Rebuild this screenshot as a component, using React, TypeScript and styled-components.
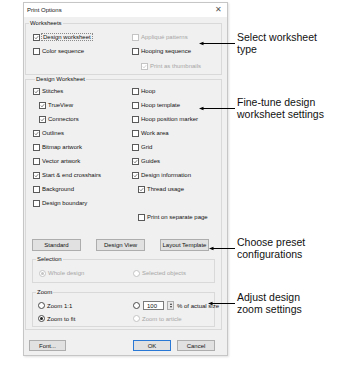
import React from 'react'
import styled, { createGlobalStyle } from 'styled-components'

const GlobalStyle = createGlobalStyle`
    html, body {
        margin: 0;
        padding: 0;
        background: #ffffff;
    }
    body {
        width: 338px;
        height: 372px;
        overflow: hidden;
        font-family: "Liberation Sans", Arial, sans-serif;
    }
`

const Page = styled.div`
    position: relative;
    width: 338px;
    height: 372px;
    box-sizing: border-box;
    padding: 2px 0 0 23px;
`

const Dialog = styled.div`
    width: 205px;
    height: 354px;
    box-sizing: border-box;
    border: 1px solid #c6c6c6;
    background: #f0f0f0;
    display: flex;
    flex-direction: column;
    box-shadow: 1px 1px 2px rgba(0, 0, 0, 0.12);
`

const TitleBar = styled.div`
    height: 14px;
    flex: none;
    background: #ffffff;
    display: flex;
    align-items: center;
    justify-content: space-between;
    padding: 0 5px 0 3px;
    font-size: 6px;
    color: #111;
`

const Close = styled.span`
    font-size: 8px;
    line-height: 8px;
    color: #555;
`

const Body = styled.div`
    padding: 3px 5px 0 1px;
    display: flex;
    flex-direction: column;
`

const Group = styled.fieldset<{ $top?: number; $pad?: string }>`
    margin: ${p => p.$top ?? 0}px 0 0 0;
    padding: ${p => p.$pad ?? '0'};
    border: 1px solid #d9d9d9;
    min-width: 0;
    font-size: 6px;
`

const Legend = styled.legend`
    margin-left: 3px;
    padding: 0 1px;
    font-size: 6px;
    line-height: 7px;
    color: #111;
`

const Grid = styled.div<{ $col: number; $lead: number }>`
    display: grid;
    grid-template-columns: ${p => p.$col}px 1fr;
    padding-left: ${p => p.$lead}px;
`

const Row = styled.div<{ $indent?: number; $disabled?: boolean; $shift?: number; $h?: number }>`
    display: flex;
    align-items: center;
    gap: 2px;
    height: ${p => p.$h ?? 14}px;
    margin-top: ${p => p.$shift ?? 0}px;
    padding-left: ${p => p.$indent ?? 0}px;
    font-size: 6px;
    white-space: nowrap;
    color: ${p => (p.$disabled ? '#a6a6a6' : '#111')};
`

const Box = styled.span<{ $disabled?: boolean }>`
    width: 7px;
    height: 7px;
    flex: none;
    box-sizing: border-box;
    border: 1px solid ${p => (p.$disabled ? '#c4c4c4' : '#5a5a5a')};
    background: #ffffff;
    display: flex;
    align-items: center;
    justify-content: center;
`

const Dot = styled.span<{ $disabled?: boolean }>`
    width: 7px;
    height: 7px;
    flex: none;
    box-sizing: border-box;
    border-radius: 50%;
    border: 1px solid ${p => (p.$disabled ? '#c4c4c4' : '#4a4a4a')};
    background: #ffffff;
    display: flex;
    align-items: center;
    justify-content: center;
    &::after {
        content: '';
        width: 3px;
        height: 3px;
        border-radius: 50%;
        background: ${p => (p.$disabled ? '#c4c4c4' : '#222')};
        display: var(--dot, none);
    }
`

const Focus = styled.span`
    outline: 1px dotted #8a8a8a;
    outline-offset: 0px;
    padding: 0 1px;
`

const Buttons = styled.div<{ $top: number; $lead: number; $gap: number }>`
    display: flex;
    gap: ${p => p.$gap}px;
    margin-top: ${p => p.$top}px;
    padding-left: ${p => p.$lead}px;
`

const Button = styled.div<{ $w: number; $h?: number; $primary?: boolean; $push?: boolean }>`
    width: ${p => p.$w}px;
    height: ${p => p.$h ?? 12}px;
    box-sizing: border-box;
    border: 1px solid ${p => (p.$primary ? '#2a78d6' : '#adadad')};
    background: #e1e1e1;
    display: flex;
    align-items: center;
    justify-content: center;
    font-size: 6px;
    color: #111;
    margin-left: ${p => (p.$push ? 'auto' : '0')};
`

const Field = styled.span`
    width: 21px;
    height: 9px;
    box-sizing: border-box;
    border: 1px solid #7a7a7a;
    background: #fff;
    display: flex;
    align-items: center;
    padding-left: 3px;
    margin-left: 1px;
    font-size: 6px;
`

const Spin = styled.span`
    width: 7px;
    height: 9px;
    box-sizing: border-box;
    border: 1px solid #adadad;
    background: #e8e8e8;
    display: flex;
    flex-direction: column;
    align-items: center;
    justify-content: space-around;
    margin: 0 1px 0 1px;
    &::before,
    &::after {
        content: '';
        width: 0;
        height: 0;
        border-left: 1.5px solid transparent;
        border-right: 1.5px solid transparent;
    }
    &::before {
        border-bottom: 2px solid #333;
    }
    &::after {
        border-top: 2px solid #333;
    }
`

const Footer = styled.div`
    display: flex;
    gap: 6px;
    margin-top: 10px;
    padding: 0 7px 0 4px;
`

const Callout = styled.div<{ $top: number; $left: number }>`
    position: absolute;
    top: ${p => p.$top}px;
    left: ${p => p.$left}px;
    display: flex;
    align-items: center;
    gap: 2px;
`

const Note = styled.div`
    font-size: 10.5px;
    line-height: 12px;
    color: #111;
    white-space: nowrap;
`

function Check({ checked, disabled }: { checked?: boolean; disabled?: boolean }) {
    return (
        <Box $disabled={disabled}>
            {checked && (
                <svg width="7" height="7" viewBox="0 0 10 10">
                    <path
                        d="M1.8 5.2 L4 7.6 L8.4 2.4"
                        fill="none"
                        stroke={disabled ? '#b5b5b5' : '#2b2b2b'}
                        strokeWidth="1.2"
                    />
                </svg>
            )}
        </Box>
    )
}

type Opt = { label?: string; checked?: boolean; disabled?: boolean; indent?: number; shift?: number; focus?: boolean }

function Option({ label, checked, disabled, indent, shift, focus }: Opt) {
    if (!label) return <Row $shift={shift} />
    return (
        <Row $indent={indent} $disabled={disabled} $shift={shift}>
            <Check checked={checked} disabled={disabled} />
            {focus ? <Focus>{label}</Focus> : <span>{label}</span>}
        </Row>
    )
}

function Radio({ checked, disabled }: { checked?: boolean; disabled?: boolean }) {
    return <Dot $disabled={disabled} style={{ ['--dot' as string]: checked ? 'block' : 'none' }} />
}

function Arrow({ width }: { width: number }) {
    return (
        <svg width={width} height="5" viewBox={`0 0 ${width} 5`}>
            <line x1="3" y1="2.5" x2={width} y2="2.5" stroke="#000" strokeWidth="1" />
            <path d="M0 2.5 L4.5 0.8 L4.5 4.2 Z" fill="#000" />
        </svg>
    )
}

const worksheets: Opt[] = [
    { label: 'Design worksheet', checked: true, focus: true },
    { label: 'Appliqué patterns', disabled: true },
    { label: 'Color sequence' },
    { label: 'Hooping sequence' },
    { shift: 1 },
    { label: 'Print as thumbnails', checked: true, disabled: true, indent: 9, shift: 1 },
]

const design: Opt[] = [
    { label: 'Stitches', checked: true },
    { label: 'Hoop' },
    { label: 'TrueView', checked: true, indent: 6 },
    { label: 'Hoop template' },
    { label: 'Connectors', checked: true, indent: 6 },
    { label: 'Hoop position marker' },
    { label: 'Outlines', checked: true },
    { label: 'Work area' },
    { label: 'Bitmap artwork' },
    { label: 'Grid' },
    { label: 'Vector artwork' },
    { label: 'Guides', checked: true },
    { label: 'Start & end crosshairs', checked: true },
    { label: 'Design information', checked: true },
    { label: 'Background' },
    { label: 'Thread usage', checked: true, indent: 6 },
    { label: 'Design boundary' },
    {},
    {},
    { label: 'Print on separate page', indent: 6 },
]

export default function App() {
    return (
        <Page>
            <GlobalStyle />
            <Dialog>
                <TitleBar>
                    <span>Print Options</span>
                    <Close>✕</Close>
                </TitleBar>
                <Body>
                    <Group $pad="3px 0 1px 0">
                        <Legend>Worksheets</Legend>
                        <Grid $col={99} $lead={7}>
                            {worksheets.map((o, i) => (
                                <Option key={i} {...o} />
                            ))}
                        </Grid>
                    </Group>
                    <Group $top={1} $pad="1px 6px 2px 6px">
                        <Legend>Design Worksheet</Legend>
                        <Grid $col={99} $lead={1}>
                            {design.map((o, i) => (
                                <Option key={i} {...o} />
                            ))}
                        </Grid>
                        <Buttons $top={15} $lead={0} $gap={15}>
                            <Button $w={49}>Standard</Button>
                            <Button $w={49}>Design View</Button>
                            <Button $w={49}>Layout Template</Button>
                        </Buttons>
                        <Group $top={5} $pad="3px 0 2px 0">
                            <Legend>Selection</Legend>
                            <Grid $col={94} $lead={6}>
                                <Row $disabled>
                                    <Radio checked disabled />
                                    <span>Whole design</span>
                                </Row>
                                <Row $disabled>
                                    <Radio disabled />
                                    <span>Selected objects</span>
                                </Row>
                            </Grid>
                        </Group>
                        <Group $top={6} $pad="3px 0 1px 0">
                            <Legend>Zoom</Legend>
                            <Grid $col={95} $lead={5}>
                                <Row $h={13}>
                                    <Radio />
                                    <span>Zoom 1:1</span>
                                </Row>
                                <Row $h={13}>
                                    <Radio />
                                    <Field>100</Field>
                                    <Spin />
                                    <span>% of actual size</span>
                                </Row>
                                <Row $h={13}>
                                    <Radio checked />
                                    <span>Zoom to fit</span>
                                </Row>
                                <Row $h={13} $disabled>
                                    <Radio disabled />
                                    <span>Zoom to article</span>
                                </Row>
                            </Grid>
                        </Group>
                    </Group>
                    <Footer>
                        <Button $w={37} $h={11}>Font...</Button>
                        <Button $w={38} $h={11} $primary $push>OK</Button>
                        <Button $w={38} $h={11}>Cancel</Button>
                    </Footer>
                </Body>
            </Dialog>

            <Callout $top={31} $left={199}>
                <Arrow width={36} />
                <Note>
                    Select worksheet
                    <br />
                    type
                </Note>
            </Callout>
            <Callout $top={96} $left={199}>
                <Arrow width={36} />
                <Note>
                    Fine-tune design
                    <br />
                    worksheet settings
                </Note>
            </Callout>
            <Callout $top={236} $left={209}>
                <Arrow width={26} />
                <Note>
                    Choose preset
                    <br />
                    configurations
                </Note>
            </Callout>
            <Callout $top={291} $left={208}>
                <Arrow width={27} />
                <Note>
                    Adjust design
                    <br />
                    zoom settings
                </Note>
            </Callout>
        </Page>
    )
}
